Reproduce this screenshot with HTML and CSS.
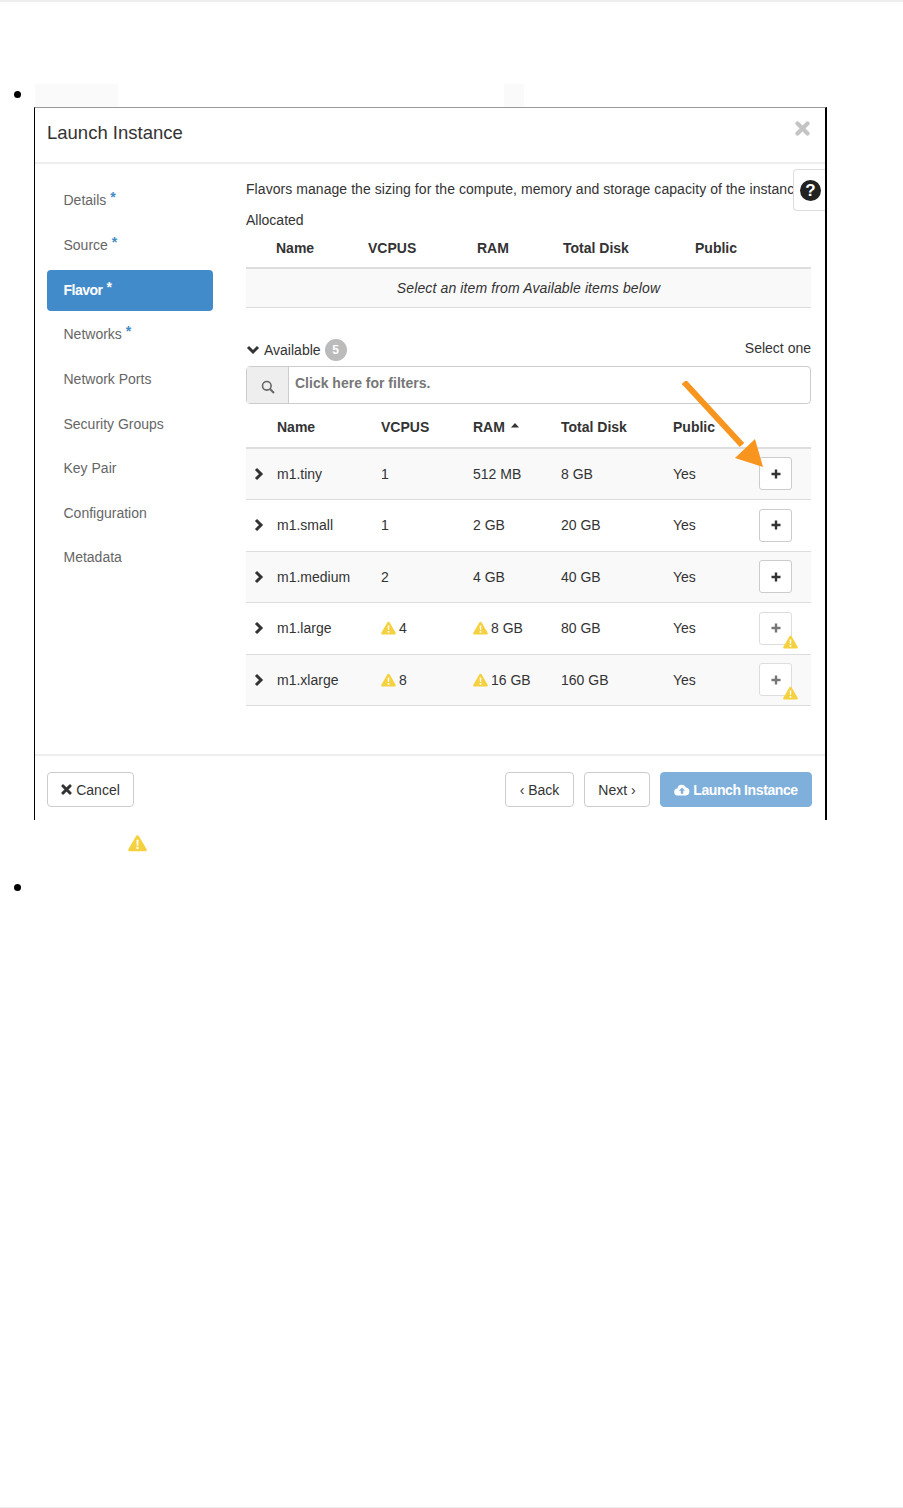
FILE: index.html
```html
<!DOCTYPE html>
<html lang="en">
<head>
<meta charset="utf-8">
<title>Launch Instance</title>
<link rel="stylesheet" href="styles.css">
</head>
<body>
<svg class="defs" width="0" height="0" aria-hidden="true">
  <symbol id="warn" viewBox="0 0 20 18">
    <path d="M10 .8c.7 0 1.2.4 1.6 1l7.9 13.6c.7 1.2-.1 2.4-1.4 2.4H1.9C.6 17.8-.2 16.6.5 15.4L8.4 1.800c.4-.6.9-1 1.600-1z" fill="#f6d13f"/>
    <path d="M8.900 5.600h2.200l-.3 6.200H9.200zM8.900 13h2.200v2.200H8.900z" fill="#fff"/>
  </symbol>
  <symbol id="chev" viewBox="0 0 10 14">
    <path d="M2 2l5 5-5 5" fill="none" stroke="#333" stroke-width="3"/>
  </symbol>
  <symbol id="plus" viewBox="0 0 10 10">
    <path d="M5 .5v9M.5 5h9" fill="none" stroke="currentColor" stroke-width="2.400"/>
  </symbol>
</svg>
<div class="page">
  <ul class="doc">
    <li>
      <div class="redacted-line"><span class="redacted wide">&nbsp;</span><span class="redacted narrow">&nbsp;</span></div>
      <section class="shot">
        <header class="modal-head">
          <h1>Launch Instance</h1>
          <svg class="close" viewBox="0 0 15 15" aria-label="Close"><path d="M2.500 2.500l10 10M12.500 2.500l-10 10" stroke="#c4c4c4" stroke-width="4.200" stroke-linecap="round"/></svg>
        </header>
        <div class="modal-body">
          <nav class="steps">
            <a class="step">Details<sup>*</sup></a>
            <a class="step">Source<sup>*</sup></a>
            <a class="step active">Flavor<sup>*</sup></a>
            <a class="step">Networks<sup>*</sup></a>
            <a class="step">Network Ports</a>
            <a class="step">Security Groups</a>
            <a class="step">Key Pair</a>
            <a class="step">Configuration</a>
            <a class="step">Metadata</a>
          </nav>
          <div class="pane">
            <p class="intro">Flavors manage the sizing for the compute, memory and storage capacity of the instance.</p>
            <p class="allocated">Allocated</p>
            <div class="row-alloc head">
              <span>Name</span><span>VCPUS</span><span>RAM</span><span>Total Disk</span><span>Public</span>
            </div>
            <div class="empty">Select an item from Available items below</div>

            <div class="avail-title">
              <span class="avail-left">
                <svg class="chev-down" viewBox="0 0 14 10"><path d="M2 2l5 5 5-5" fill="none" stroke="#333" stroke-width="3"/></svg>
                Available <span class="badge">5</span>
              </span>
              <span class="select-one">Select one</span>
            </div>
            <div class="search">
              <span class="search-addon">
                <svg viewBox="0 0 14 14"><circle cx="5.800" cy="5.800" r="4.300" fill="none" stroke="#666" stroke-width="1.600"/><path d="M9 9l4 4" stroke="#666" stroke-width="2"/></svg>
              </span>
              <span class="search-text">Click here for filters.</span>
            </div>

            <div class="row-avail head">
              <span></span><span>Name</span><span>VCPUS</span><span>RAM <svg class="sort" viewBox="0 0 8 5"><path d="M4 0l4 4.500H0z" fill="#333"/></svg></span><span>Total Disk</span><span>Public</span><span></span>
            </div>
            <div class="row-avail item odd">
              <svg class="chev"><use href="#chev"/></svg><span>m1.tiny</span><span>1</span><span>512 MB</span><span>8 GB</span><span>Yes</span>
              <span class="add"><svg class="plus"><use href="#plus"/></svg></span>
            </div>
            <div class="row-avail item">
              <svg class="chev"><use href="#chev"/></svg><span>m1.small</span><span>1</span><span>2 GB</span><span>20 GB</span><span>Yes</span>
              <span class="add"><svg class="plus"><use href="#plus"/></svg></span>
            </div>
            <div class="row-avail item odd">
              <svg class="chev"><use href="#chev"/></svg><span>m1.medium</span><span>2</span><span>4 GB</span><span>40 GB</span><span>Yes</span>
              <span class="add"><svg class="plus"><use href="#plus"/></svg></span>
            </div>
            <div class="row-avail item">
              <svg class="chev"><use href="#chev"/></svg><span>m1.large</span>
              <span class="warned"><svg class="warn"><use href="#warn"/></svg>4</span>
              <span class="warned"><svg class="warn"><use href="#warn"/></svg>8 GB</span>
              <span>80 GB</span><span>Yes</span>
              <span class="add off"><svg class="plus"><use href="#plus"/></svg><svg class="warn over"><use href="#warn"/></svg></span>
            </div>
            <div class="row-avail item odd">
              <svg class="chev"><use href="#chev"/></svg><span>m1.xlarge</span>
              <span class="warned"><svg class="warn"><use href="#warn"/></svg>8</span>
              <span class="warned"><svg class="warn"><use href="#warn"/></svg>16 GB</span>
              <span>160 GB</span><span>Yes</span>
              <span class="add off"><svg class="plus"><use href="#plus"/></svg><svg class="warn over"><use href="#warn"/></svg></span>
            </div>
          </div>
        </div>
        <footer class="modal-foot">
          <span class="btn cancel">
            <svg class="x-icon" viewBox="0 0 12 12"><path d="M2.200 2.200l7.600 7.600M9.800 2.200l-7.600 7.600" stroke="#333" stroke-width="3.400" stroke-linecap="round"/></svg>Cancel
          </span>
          <span class="btn back">‹ Back</span>
          <span class="btn next">Next ›</span>
          <span class="btn launch">
            <svg class="cloud" viewBox="0 0 16 12"><path d="M4 11.500a3.500 3.500 0 0 1-.6-7A4.500 4.500 0 0 1 12 3.600a4 4 0 0 1 0 7.900z" fill="#fff"/><path d="M8 3.500L11 6.800H9.200v3H6.800v-3H5z" fill="#7fb0dc"/></svg>Launch Instance
          </span>
        </footer>
        <svg class="arrow" viewBox="0 0 100 100" aria-hidden="true">
          <path d="M2 1L60 64" stroke="#f7951f" stroke-width="6" fill="none"/>
          <path d="M81 86L53 77 73 58z" fill="#f7951f"/>
        </svg>
        <span class="help"><span class="help-dot">?</span></span>
      </section>
      <div class="note"><svg class="note-warn"><use href="#warn"/></svg></div>
    </li>
    <li class="blank">&nbsp;</li>
  </ul>
</div>
</body>
</html>
```
FILE: styles.css
```css
* { box-sizing: border-box; }
html, body { margin: 0; padding: 0; }
body {
  background: #fff;
  color: #333;
  font-family: "Liberation Sans", Arial, sans-serif;
  font-size: 14px;
  line-height: 20px;
}
.defs { position: absolute; }
.page {
  min-height: 1508px;
  display: flex;
  flex-direction: column;
  border-top: 2px solid #eeeeee;
  border-bottom: 1px solid #eeeeee;
}
.doc {
  margin: 0;
  padding: 82px 0 0 34px;
  color: #000;
  font-family: "Liberation Serif", serif;
  font-size: 16px;
}
.doc li::marker { font-size: 22px; }

/* first line with the pale blanks */
.redacted-line { display: flex; height: 23px; padding-left: 1px; line-height: 20px; }
.redacted { display: block; height: 23px; background: #fafafa; }
.redacted.wide { width: 83px; padding-top: 2px; }
.redacted.narrow { width: 20px; margin-left: 386px; }

/* screenshot frame */
.shot {
  position: relative;
  width: 793px;
  height: 713px;
  border-left: 1px solid #000;
  border-right: 2px solid #000;
  border-top: 1px solid #999;
  color: #333;
  font-family: "Liberation Sans", Arial, sans-serif;
  font-size: 14px;
  line-height: 20px;
  background: #fff;
}
.modal-head {
  height: 56px;
  padding: 0 15px 0 12px;
  display: flex;
  align-items: center;
  justify-content: space-between;
  border-bottom: 2px solid #eeeeee;
}
.modal-head h1 {
  margin: 0 0 4px;
  font-size: 18.5px;
  font-weight: 400;
  line-height: 50px;
}
.close { width: 15px; height: 15px; margin-bottom: 14px; }

.modal-body {
  display: grid;
  grid-template-columns: 166px 565px;
  column-gap: 33px;
  padding-left: 12px;
  height: 592px;
  border-bottom: 2px solid #eeeeee;
}
.steps {
  display: flex;
  flex-direction: column;
  gap: 3.65px;
  padding-top: 16.3px;
}
.step {
  display: block;
  height: 41px;
  line-height: 41px;
  padding-left: 16.5px;
  color: #666;
  border-radius: 4px;
}
.step sup {
  color: #428bca;
  font-size: 14px;
  font-weight: 700;
  line-height: 0;
  margin-left: 4px;
  vertical-align: 3px;
}
.step.active { background: #428bca; color: #fff; font-weight: 700; letter-spacing: -0.5px; }
.step.active sup { color: #fff; }

.pane { padding-top: 15px; }
.intro {
  margin: 0;
  height: 20px;
  white-space: nowrap;
  overflow: hidden;
  width: 547px;
  letter-spacing: 0.06px;
}
.allocated { margin: 11px 0 0; }
.row-alloc {
  display: grid;
  grid-template-columns: 30px 92px 109px 86px 132px 116px;
  height: 39px;
  align-items: center;
  font-weight: 700;
  border-bottom: 2px solid #ddd;
  padding-bottom: 2px;
}
.row-alloc span:first-child { grid-column: 1 / 3; padding-left: 30px; }
.empty {
  height: 39px;
  line-height: 38px;
  text-align: center;
  font-style: italic;
  letter-spacing: 0.12px;
  background: #f9f9f9;
  border-bottom: 1px solid #ddd;
}
.avail-title {
  display: flex;
  justify-content: space-between;
  align-items: flex-start;
  margin-top: 30px;
  height: 28px;
}
.avail-left { display: flex; align-items: center; height: 24px; }
.chev-down { width: 14px; height: 10px; margin-right: 4px; }
.badge {
  width: 22px;
  height: 22px;
  margin-left: 4px;
  border-radius: 50%;
  background: #bbb;
  color: #fff;
  font-weight: 700;
  font-size: 12px;
  line-height: 22px;
  text-align: center;
}
.select-one { line-height: 20px; }
.search {
  display: flex;
  height: 38px;
  border: 1px solid #ccc;
  border-radius: 4px;
}
.search-addon {
  width: 42px;
  background: #eee;
  border-right: 1px solid #ccc;
  display: flex;
  align-items: center;
  justify-content: center;
  padding-top: 3px;
}
.search-addon svg { width: 14px; height: 14px; }
.search-text {
  padding-left: 6px;
  line-height: 32px;
  color: #777;
  font-weight: 700;
}

.row-avail {
  display: grid;
  grid-template-columns: 31px 104px 92px 88px 112px 86px 52px;
  align-items: center;
}
.row-avail.head {
  height: 44.5px;
  font-weight: 700;
  border-bottom: 2px solid #ddd;
  padding-top: 4px;
}
.row-avail.item { height: 51.5px; border-bottom: 1px solid #ddd; }
.row-avail.odd { background: #f9f9f9; }
.sort { width: 8px; height: 5px; margin-left: 2px; vertical-align: 4px; }
.chev { width: 10px; height: 14px; margin-left: 8px; }
.warned { display: flex; align-items: center; gap: 3px; }
.warn { width: 15px; height: 14px; flex: none; }
.add {
  position: relative;
  width: 33px;
  height: 33px;
  display: flex;
  align-items: center;
  justify-content: center;
  background: #fff;
  border: 1px solid #ccc;
  border-radius: 3px;
  color: #333;
}
.plus { width: 10px; height: 10px; }
.add.off { color: #777; border-color: #ddd; }
.warn.over { position: absolute; right: -7px; bottom: -5px; }

.modal-foot {
  display: flex;
  align-items: center;
  gap: 10px;
  padding: 16px 13px 0 12px;
}
.btn {
  display: flex;
  align-items: center;
  justify-content: center;
  height: 35px;
  background: #fff;
  border: 1px solid #ccc;
  border-radius: 4px;
}
.cancel { width: 87px; margin-right: auto; }
.back { width: 69px; }
.next { width: 66px; }
.launch {
  width: 152px;
  background: #7fb0dc;
  border-color: #7fb0dc;
  color: #fff;
  font-weight: 700;
  letter-spacing: -0.4px;
}
.x-icon { width: 11px; height: 11px; margin-right: 4px; }
.cloud { width: 16px; height: 12px; margin-right: 3px; }

.arrow {
  position: absolute;
  left: 647px;
  top: 273px;
  width: 100px;
  height: 100px;
}
.help {
  position: absolute;
  right: 0;
  top: 61px;
  width: 32px;
  height: 42px;
  background: #fff;
  border: 1px solid #ddd;
  border-right: 0;
  border-radius: 4px 0 0 4px;
  display: flex;
  align-items: center;
  justify-content: center;
}
.help-dot {
  width: 21px;
  height: 21px;
  margin-left: 2px;
  border-radius: 50%;
  background: #222;
  color: #fff;
  font-weight: 700;
  font-size: 17px;
  line-height: 21px;
  text-align: center;
}
.note { height: 46px; padding: 14px 0 0 94px; }
.note-warn { width: 19px; height: 18px; display: block; }
.blank { margin-top: 11px; }
```
